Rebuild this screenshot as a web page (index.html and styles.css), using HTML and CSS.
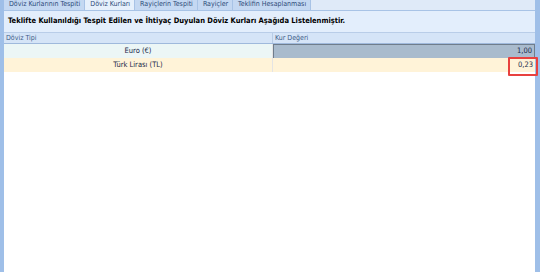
FILE: index.html
```html
<!DOCTYPE html>
<html lang="tr">
<head>
<meta charset="utf-8">
<link rel="stylesheet" href="styles.css">
</head>
<body>
<div class="frame">
  <div class="tabs">
    <div class="tab">Döviz Kurlarının Tespiti</div>
    <div class="tab active">Döviz Kurları</div>
    <div class="tab">Rayiçlerin Tespiti</div>
    <div class="tab">Rayiçler</div>
    <div class="tab">Teklifin Hesaplanması</div>
  </div>
  <div class="panel">
    <div class="title">Teklifte Kullanıldığı Tespit Edilen ve İhtiyaç Duyulan Döviz Kurları Aşağıda Listelenmiştir.</div>
    <div class="grid">
      <div class="head">
        <div class="c1">Döviz Tipi</div>
        <div class="c2">Kur Değeri</div>
      </div>
      <div class="row r1">
        <div class="c1 name">Euro (€)</div>
        <div class="c2 val sel">1,00</div>
      </div>
      <div class="row r2">
        <div class="c1 name">Türk Lirası (TL)</div>
        <div class="c2 val"><span class="mark">0,23</span></div>
      </div>
      <div class="empty"></div>
    </div>
  </div>
</div>
</body>
</html>
```
FILE: styles.css
```css
html, body { margin: 0; padding: 0; }
body {
  width: 540px; height: 272px; overflow: hidden;
  font-family: "DejaVu Sans Condensed", "DejaVu Sans", sans-serif;
  font-size: 8px;
  color: #1e3a5f;
  background: #ffffff;
}
.frame {
  height: 272px;
  display: flex; flex-direction: column;
  border-left: 4px solid #9fbfe8;
  border-right: 5px solid #9fbfe8;
  box-sizing: border-box;
  background: #dfeaf8;
}
.tabs {
  display: flex; height: 10px;
  background: #dfeaf8;
  border-bottom: 1px solid #a8c3e6;
}
.tab {
  height: 10px; line-height: 8px; padding: 0 4px 0 5px;
  background: #c4d8f2; color: #2c4a78;
  border-right: 1px solid #a8c3e6;
  box-sizing: border-box; font-size: 7px;
}
.tab.active { background: #e6f0fc; }
.panel { flex: 1; display: flex; flex-direction: column; background: #e3eefc; }
.title {
  height: 21px; line-height: 20px; padding-left: 4px;
  font-weight: bold; color: #000; font-size: 7.5px;
  border-bottom: 1px solid #b9cde8;
}
.grid { flex: 1; display: flex; flex-direction: column; background: #fff; }
.head, .row { display: grid; grid-template-columns: 269px 1fr; }
.head {
  height: 10px; line-height: 10px;
  background: #d5e4f7; color: #3d5c88;
  border-bottom: 1px solid #9fb9dc;
}
.head .c1, .head .c2 { padding-left: 2px; font-size: 7px; }
.head .c1 { border-right: 1px solid #b8cce6; }
.row { height: 14px; line-height: 14px; color: #1a2a4a; font-size: 7.5px; }
.row .c1 { border-right: 1px solid #e4e4e4; text-align: center; border-bottom: 1px solid #e6ebf0; }
.r1 { background: #ecf6f6; }
.r2 { background: #fff3d8; }
.val { text-align: right; padding-right: 2px; }
.sel { background: #a9bbcd; border: 1px solid #6f7d8c; box-sizing: border-box; line-height: 12px; }
.mark { display: inline-block; position: relative; }
.mark::after {
  content: ""; position: absolute; left: -10px; right: -5px; top: -1px; bottom: -4px;
  border: 2px solid #e8413e; border-radius: 1px;
}
.empty { flex: 1; background: #fff; }
```
